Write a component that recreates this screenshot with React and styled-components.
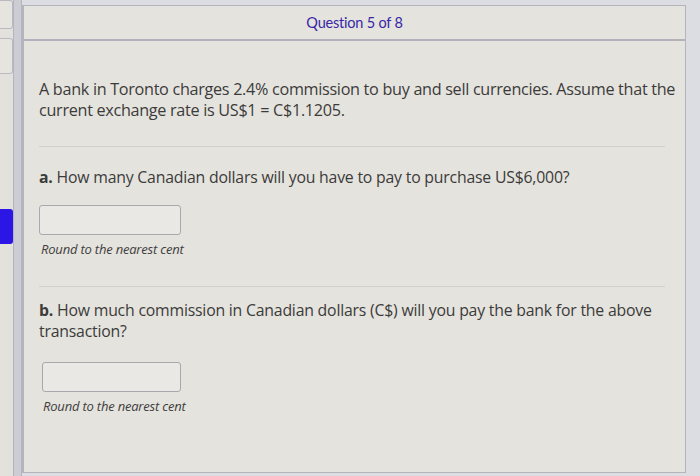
import React from "react";
import styled, { createGlobalStyle } from "styled-components";

const GlobalStyle = createGlobalStyle`
	html, body {
		margin: 0;
		padding: 0;
		background: #dcdce3;
	}
	body {
		width: 700px;
		height: 476px;
		overflow: hidden;
		font-family: "Open Sans", "Liberation Sans", sans-serif;
	}
`;

const Page = styled.div`
	display: flex;
	height: 476px;
	background: #dcdce3;
`;

const SideNav = styled.div`
	width: 13px;
	display: flex;
	flex-direction: column;
	gap: 9px;
	background: #e3e1dc;
`;

const NavTab = styled.div`
	height: ${(p) => p.h}px;
	margin-top: ${(p) => p.top || 0}px;
	background: ${(p) => (p.active ? "#2c16e6" : "#e6e4df")};
	border: 1px solid ${(p) => (p.active ? "#2c16e6" : "#b9b9c2")};
	border-left: none;
	border-radius: 0 3px 3px 0;
`;

const Gutter = styled.div`
	width: 7px;
	background: #cbccd4;
	border-left: 1px solid #b3b4bd;
	border-right: 1px solid #b3b4bd;
`;

const Main = styled.div`
	flex: 1;
	margin: 5px 14px 3px 0;
	display: flex;
	flex-direction: column;
	background: #e5e3dd;
	border: 1px solid #b4b4bc;
	border-left: 2px solid #b4b4bc;
`;

const Header = styled.div`
	height: 33px;
	display: flex;
	align-items: center;
	justify-content: center;
	border-bottom: 2px solid #b2b2ba;
	font-family: Lato, "Liberation Sans", sans-serif;
	font-size: 14.5px;
	color: #3727a8;
	letter-spacing: -0.2px;
`;

const Body = styled.div`
	padding: 0 0 0 15px;
	color: #3b3b3b;
`;

const Prompt = styled.p`
	margin: 38px 0 0;
	font-size: 16.2px;
	line-height: 21px;
	letter-spacing: -0.3px;
`;

const Divider = styled.div`
	height: 1px;
	background: #d2d0cb;
	margin-top: ${(p) => p.top}px;
	margin-right: 20px;
`;

const Question = styled.p`
	margin: ${(p) => p.top}px 0 0;
	font-size: 15.8px;
	line-height: 21px;
	letter-spacing: -0.2px;
	max-width: 630px;
`;

const Part = styled.b`
	font-weight: 700;
`;

const AnswerBox = styled.input`
	display: block;
	box-sizing: border-box;
	width: ${(p) => p.w}px;
	height: 30px;
	margin: ${(p) => p.top}px 0 0 ${(p) => p.left || 0}px;
	border: 1.5px solid #a9a9ad;
	border-radius: 3px;
	background: #e9e8e4;
	outline: none;
`;

const Hint = styled.div`
	margin: 5px 0 0 ${(p) => p.left || 2}px;
	font-size: 13px;
	line-height: 18px;
	font-style: italic;
	color: #3e3e3e;
	letter-spacing: -0.2px;
`;

export default function App() {
	return (
		<>
			<GlobalStyle />
			<Page>
				<SideNav>
					<NavTab h={27} />
					<NavTab h={34} />
					<NavTab h={33} active top={126} />
				</SideNav>
				<Gutter />
				<Main>
					<Header>Question 5 of 8</Header>
					<Body>
						<Prompt>
							A bank in Toronto charges 2.4% commission to buy and sell currencies. Assume that the
							current exchange rate is US$1 = C$1.1205.
						</Prompt>
						<Divider top={25} />
						<Question top={20}>
							<Part>a.</Part> How many Canadian dollars will you have to pay to purchase US$6,000?
						</Question>
						<AnswerBox w={142} top={17} />
						<Hint>Round to the nearest cent</Hint>
						<Divider top={28} />
						<Question top={13}>
							<Part>b.</Part> How much commission in Canadian dollars (C$) will you pay the bank for the above
							transaction?
						</Question>
						<AnswerBox w={139} top={20} left={3} />
						<Hint left={4}>Round to the nearest cent</Hint>
					</Body>
				</Main>
			</Page>
		</>
	);
}
